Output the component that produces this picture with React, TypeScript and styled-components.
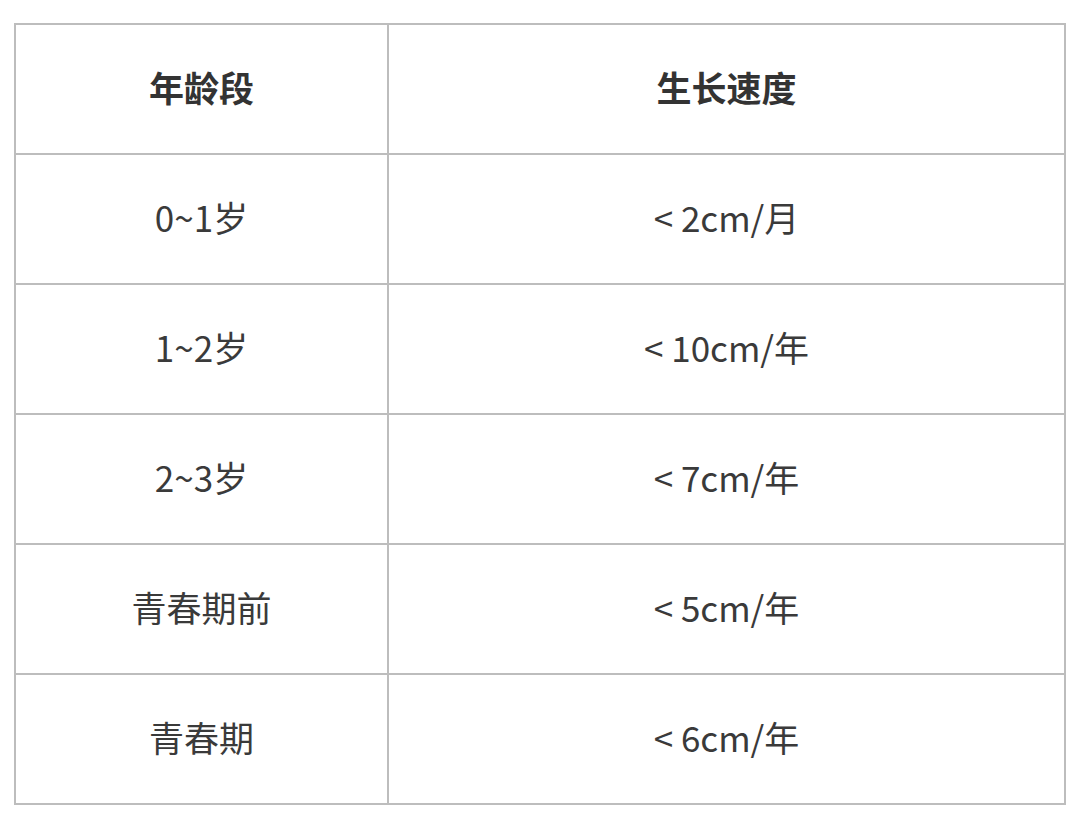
import React from 'react';
import styled, { createGlobalStyle } from 'styled-components';

const GlobalStyle = createGlobalStyle`
  html, body {
    margin: 0;
    padding: 0;
    background: #ffffff;
  }
  body {
    font-family: "Noto Sans CJK SC", "Noto Sans", sans-serif;
    color: #333333;
  }
`;

type Row = {
  age: string;
  speed: string;
};

const rows: Row[] = [
  { age: '0~1岁', speed: '< 2cm/月' },
  { age: '1~2岁', speed: '< 10cm/年' },
  { age: '2~3岁', speed: '< 7cm/年' },
  { age: '青春期前', speed: '< 5cm/年' },
  { age: '青春期', speed: '< 6cm/年' },
];

const Page = styled.div`
  padding: 23px 14px 0 14px;
`;

const Table = styled.table`
  width: 1052px;
  border-collapse: collapse;
  table-layout: fixed;
`;

const Cell = styled.td<{ $head?: boolean }>`
  border: 2px solid #bdbdbd;
  height: 123px;
  padding: 0 0 5px 0;
  text-align: center;
  vertical-align: middle;
  font-size: 35px;
  font-weight: ${(p) => (p.$head ? 700 : 400)};
  color: ${(p) => (p.$head ? '#333333' : '#3a3a3a')};
  line-height: 1;
`;

export default function App() {
  return (
    <Page>
      <GlobalStyle />
      <Table>
        <colgroup>
          <col style={{ width: 373 }} />
          <col />
        </colgroup>
        <thead>
          <tr>
            <Cell as="th" $head>年龄段</Cell>
            <Cell as="th" $head>生长速度</Cell>
          </tr>
        </thead>
        <tbody>
          {rows.map((r) => (
            <tr key={r.age}>
              <Cell>{r.age}</Cell>
              <Cell>{r.speed}</Cell>
            </tr>
          ))}
        </tbody>
      </Table>
    </Page>
  );
}
